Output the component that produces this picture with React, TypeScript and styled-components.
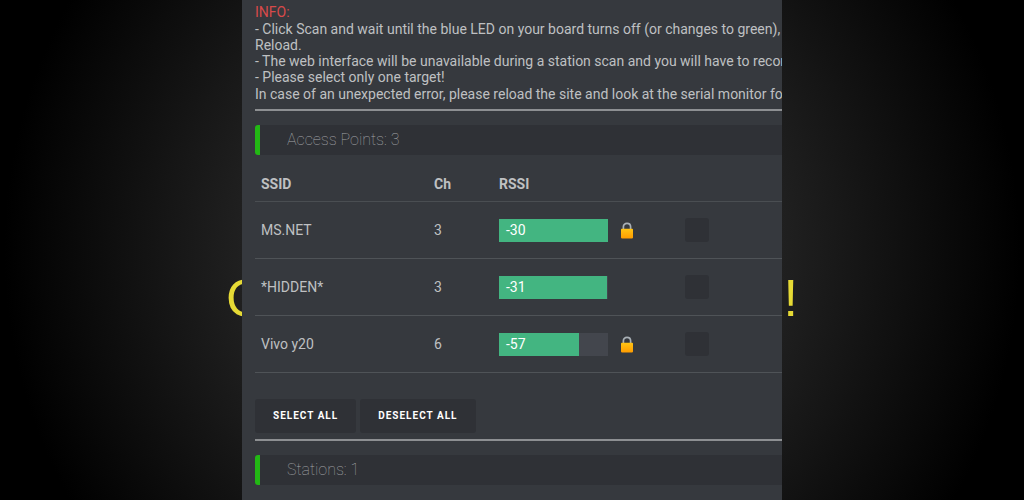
import React from "react";
import styled, { createGlobalStyle } from "styled-components";

const GlobalStyle = createGlobalStyle`
  * { box-sizing: border-box; }
  body {
    margin: 0;
    background: #000;
    font-family: Roboto, "Liberation Sans", sans-serif;
    font-size: 14px;
    line-height: 16px;
    color: #bfc0c2;
  }
`;

const Stage = styled.div`
  display: grid;
  grid-template-columns: minmax(0, 1fr);
  justify-items: center;
  min-height: 100vh;
  overflow: hidden;
  background: radial-gradient(circle at center, #333 0, #202020 270px, #000 508px);
`;

const Caption = styled.div`
  grid-area: 1 / 1;
  align-self: center;
  display: flex;
  justify-content: space-between;
  width: 572px;
  max-width: 100%;
  padding-top: 96px;
  font-family: "Liberation Sans", sans-serif;
  font-size: 52px;
  line-height: 56px;
  color: #e6da35;
`;

const Panel = styled.main`
  grid-area: 1 / 1;
  z-index: 1;
  width: 540px;
  max-width: 100%;
  padding: 4px 0 15px 13px;
  overflow: hidden;
  background: #36393e;
`;

const Info = styled.section`
  display: flex;
  flex-direction: column;
  gap: 1px;
  padding-bottom: 1px;
  white-space: nowrap;
`;

const InfoTitle = styled.strong`
  font-weight: 400;
  color: #d94a4a;
`;

const Rule = styled.hr`
  height: 2px;
  margin: 6px 0 14px;
  border: 0;
  background: #8d8f92;
`;

const SectionTitle = styled.h2`
  margin: 0;
  padding-left: 27px;
  border-left: 5px solid #22b814;
  border-radius: 3px 0 0 3px;
  background: #2f3136;
  font-size: 16px;
  font-weight: 100;
  line-height: 30px;
  color: #a3a5a8;
`;

const Table = styled.table`
  width: 100%;
  margin: 11px 0 26px;
  border-collapse: separate;
  border-spacing: 0;
  table-layout: fixed;
`;

const Col = styled.col<{ $width?: number }>`
  width: ${(p) => (p.$width ? `${p.$width}px` : "auto")};
`;

const HeadCell = styled.th`
  height: 36px;
  padding: 0 0 0 6px;
  border-bottom: 1px solid #4a4e52;
  text-align: left;
  font-weight: 700;
`;

const Cell = styled.td`
  height: 57px;
  padding: 0 0 0 6px;
  border-bottom: 1px solid #4f5357;
`;

const Meter = styled.div`
  width: 109px;
  background: #43464d;
`;

const MeterFill = styled.div`
  height: 23px;
  padding-left: 7px;
  background: #43b581;
  line-height: 23px;
  color: #fff;
`;

const LockIcon = styled.svg`
  display: block;
  width: 14px;
  height: 17px;
`;

const Check = styled.input`
  appearance: none;
  display: block;
  width: 24px;
  height: 24px;
  margin: 0;
  border-radius: 3px;
  background: #2f3136;

  &:checked {
    background: #43b581;
  }
`;

const Actions = styled.div`
  display: flex;
  gap: 4px;
`;

const Button = styled.button`
  height: 34px;
  padding: 0 18px;
  border: 0;
  border-radius: 3px;
  background: #2f3136;
  font: 700 10px/34px Roboto, "Liberation Sans", sans-serif;
  letter-spacing: 1px;
  text-transform: uppercase;
  color: #fff;
`;

type AccessPoint = { ssid: string; channel: number; rssi: number; level: number; locked: boolean };

const accessPoints: AccessPoint[] = [
  { ssid: "MS.NET", channel: 3, rssi: -30, level: 100, locked: true },
  { ssid: "*HIDDEN*", channel: 3, rssi: -31, level: 99, locked: false },
  { ssid: "Vivo y20", channel: 6, rssi: -57, level: 73, locked: true },
];

function Lock() {
  return (
    <LockIcon viewBox="0 0 14 17" role="img" aria-label="Encrypted">
      <defs>
        <linearGradient id="lock-body" x1="0" y1="0" x2="0" y2="1">
          <stop offset="0" stopColor="#ffc414" />
          <stop offset="1" stopColor="#ff9c00" />
        </linearGradient>
      </defs>
      <path d="M3.4 8V4.8C3.4 2.6 4.9 1.4 7 1.4s3.6 1.2 3.6 3.4V8" fill="none" stroke="#a9b0b6" strokeWidth="1.7" />
      <rect x="1" y="6.8" width="12" height="9.6" rx="0.8" fill="url(#lock-body)" />
    </LockIcon>
  );
}

export default function App() {
  const [selected, setSelected] = React.useState<string[]>([]);
  const toggle = (ssid: string) =>
    setSelected((s) => (s.includes(ssid) ? s.filter((x) => x !== ssid) : [...s, ssid]));

  return (
    <Stage>
      <GlobalStyle />
      <Caption>
        <span>C</span>
        <span>!</span>
      </Caption>
      <Panel>
        <Info>
          <InfoTitle>INFO:</InfoTitle>
          <div>
            - Click Scan and wait until the blue LED on your board turns off (or changes to green), t<br />
            Reload.
            <br />
            - The web interface will be unavailable during a station scan and you will have to recor
            <br />- Please select only one target!
          </div>
          <div>In case of an unexpected error, please reload the site and look at the serial monitor for</div>
        </Info>
        <Rule />
        <SectionTitle>Access Points: 3</SectionTitle>
        <Table>
          <colgroup>
            <Col $width={173} />
            <Col $width={65} />
            <Col $width={121} />
            <Col $width={65} />
            <Col />
          </colgroup>
          <thead>
            <tr>
              <HeadCell>SSID</HeadCell>
              <HeadCell>Ch</HeadCell>
              <HeadCell>RSSI</HeadCell>
              <HeadCell />
              <HeadCell />
            </tr>
          </thead>
          <tbody>
            {accessPoints.map((ap) => (
              <tr key={ap.ssid}>
                <Cell>{ap.ssid}</Cell>
                <Cell>{ap.channel}</Cell>
                <Cell>
                  <Meter>
                    <MeterFill style={{ width: `${ap.level}%` }}>{ap.rssi}</MeterFill>
                  </Meter>
                </Cell>
                <Cell>{ap.locked && <Lock />}</Cell>
                <Cell>
                  <Check
                    type="checkbox"
                    aria-label={`Select ${ap.ssid}`}
                    checked={selected.includes(ap.ssid)}
                    onChange={() => toggle(ap.ssid)}
                  />
                </Cell>
              </tr>
            ))}
          </tbody>
        </Table>
        <Actions>
          <Button type="button" onClick={() => setSelected(accessPoints.map((ap) => ap.ssid))}>
            Select all
          </Button>
          <Button type="button" onClick={() => setSelected([])}>
            Deselect all
          </Button>
        </Actions>
        <Rule />
        <SectionTitle>Stations: 1</SectionTitle>
      </Panel>
    </Stage>
  );
}
